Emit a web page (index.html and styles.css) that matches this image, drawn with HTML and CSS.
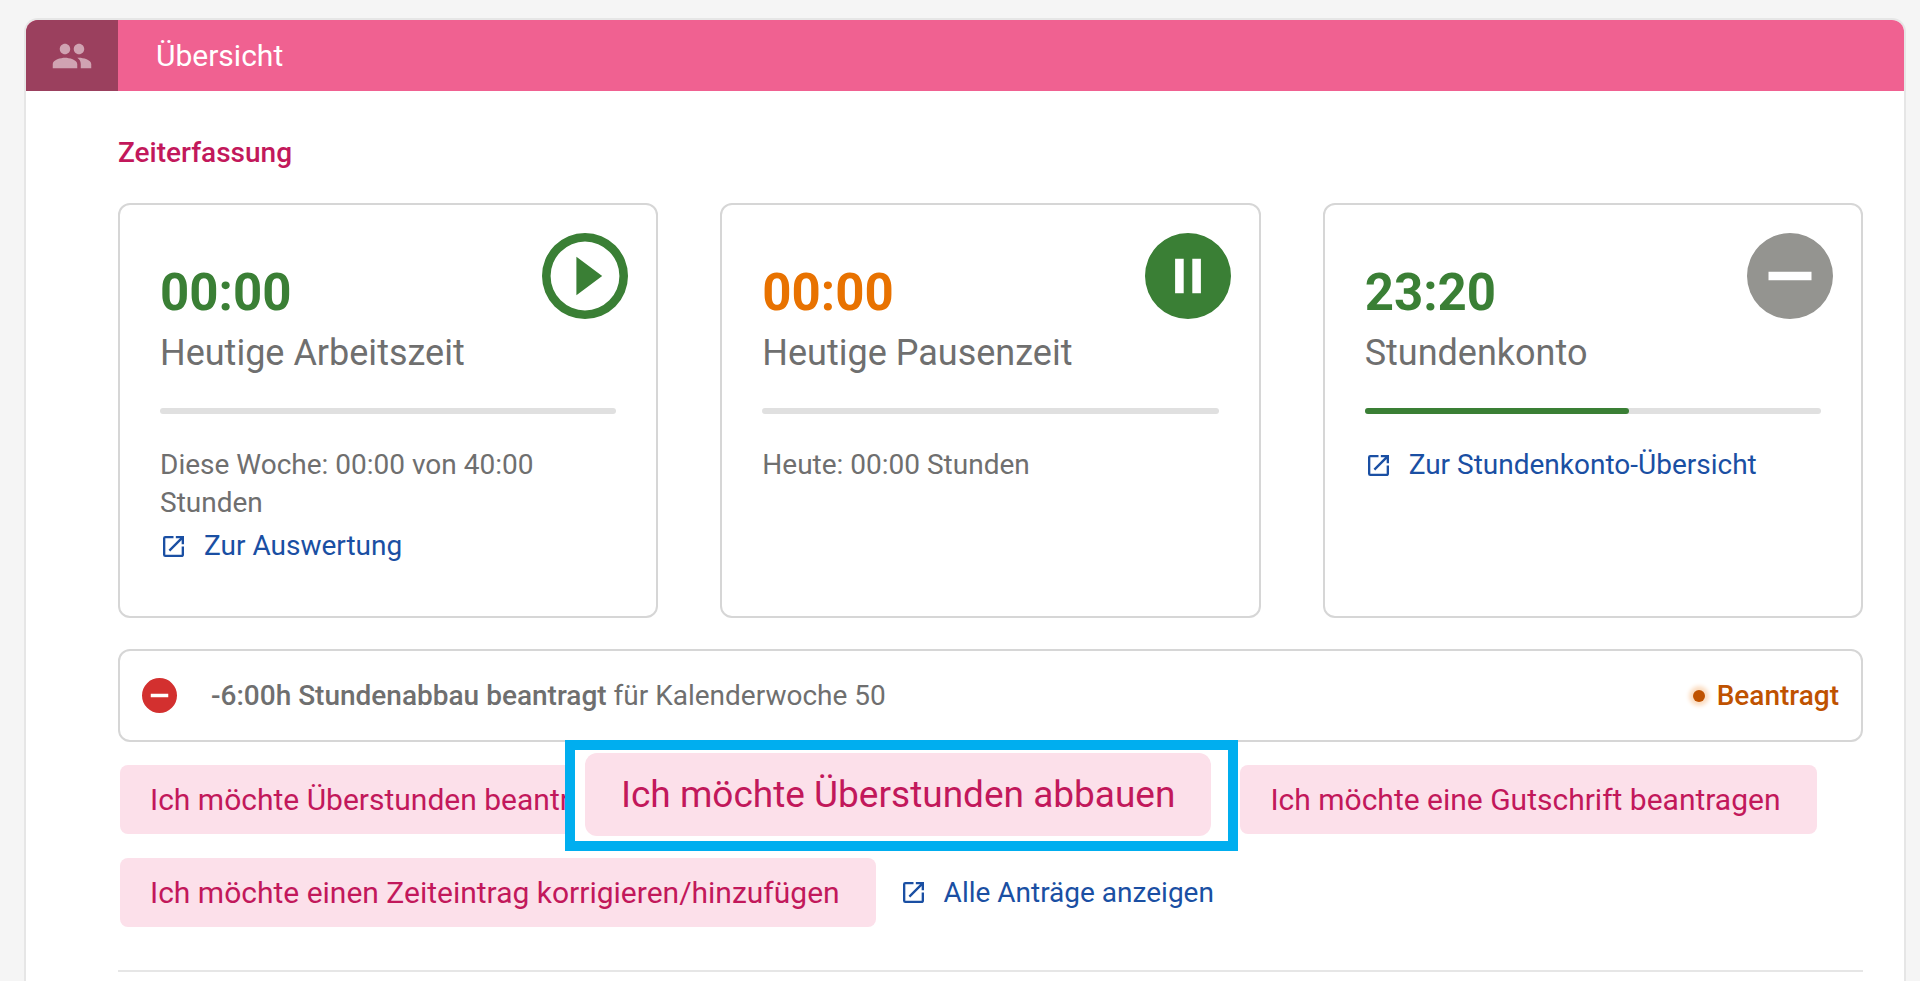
FILE: index.html
```
<!DOCTYPE html>
<html lang="de">
<head>
<meta charset="utf-8">
<title>Übersicht</title>
<link rel="stylesheet" href="styles.css">
</head>
<body>
<svg class="sprite" aria-hidden="true">
  <symbol id="open" viewBox="3 3 18 18"><path d="M19 19H5V5h7V3H5a2 2 0 0 0-2 2v14a2 2 0 0 0 2 2h14c1.100 0 2-.9 2-2v-7h-2v7zM14 3v2h3.590l-9.830 9.830 1.410 1.410L19 6.410V10h2V3h-7z"/></symbol>
</svg>
<main class="panel">
  <header class="panel-header">
    <div class="panel-icon">
      <svg viewBox="0 0 24 24" aria-hidden="true"><path d="M16 11c1.660 0 2.990-1.340 2.990-3S17.660 5 16 5s-3 1.340-3 3 1.340 3 3 3zm-8 0c1.660 0 2.990-1.340 2.990-3S9.660 5 8 5 5 6.340 5 8s1.340 3 3 3zm0 2c-2.330 0-7 1.170-7 3.500V19h14v-2.500c0-2.330-4.670-3.500-7-3.500zm8 0c-.29 0-.62.02-.97.05 1.160.84 1.970 1.970 1.970 3.450V19h6v-2.500c0-2.330-4.670-3.500-7-3.500z"/></svg>
    </div>
    <h1 class="panel-title">Übersicht</h1>
  </header>
  <div class="panel-body">
    <h2 class="section-title">Zeiterfassung</h2>
    <section class="cards">
      <article class="card">
        <div class="card-head">
          <div class="card-figures">
            <div class="value green">00:00</div>
            <div class="label">Heutige Arbeitszeit</div>
          </div>
          <button class="round green" type="button" aria-label="Arbeitszeit starten">
            <svg viewBox="2 2 20 20" aria-hidden="true"><path d="M10 16.500l6-4.500-6-4.500v9zM12 2a10 10 0 1 0 0 20 10 10 0 0 0 0-20zm0 18a8 8 0 1 1 0-16 8 8 0 0 1 0 16z"/></svg>
          </button>
        </div>
        <div class="bar"></div>
        <p class="note">Diese Woche: 00:00 von 40:00 Stunden</p>
        <a class="link" href="#"><svg aria-hidden="true"><use href="#open"/></svg>Zur Auswertung</a>
      </article>
      <article class="card">
        <div class="card-head">
          <div class="card-figures">
            <div class="value orange">00:00</div>
            <div class="label">Heutige Pausenzeit</div>
          </div>
          <button class="round green" type="button" aria-label="Pause">
            <svg viewBox="2 2 20 20" aria-hidden="true"><path d="M12 2a10 10 0 1 0 0 20 10 10 0 0 0 0-20zm-1 14H9V8h2v8zm4 0h-2V8h2v8z"/></svg>
          </button>
        </div>
        <div class="bar"></div>
        <p class="note">Heute: 00:00 Stunden</p>
      </article>
      <article class="card">
        <div class="card-head">
          <div class="card-figures">
            <div class="value green">23:20</div>
            <div class="label">Stundenkonto</div>
          </div>
          <button class="round gray" type="button" aria-label="Stunden abbauen">
            <svg viewBox="2 2 20 20" aria-hidden="true"><path d="M12 2a10 10 0 1 0 0 20 10 10 0 0 0 0-20zm5 11H7v-2h10v2z"/></svg>
          </button>
        </div>
        <div class="bar"><div class="bar-fill" style="width: 58%"></div></div>
        <a class="link" href="#"><svg aria-hidden="true"><use href="#open"/></svg>Zur Stundenkonto-Übersicht</a>
      </article>
    </section>
    <section class="request">
      <svg class="request-icon" viewBox="2 2 20 20" aria-hidden="true"><path d="M12 2a10 10 0 1 0 0 20 10 10 0 0 0 0-20zm5 11H7v-2h10v2z"/></svg>
      <p class="request-text"><strong>-6:00h Stundenabbau beantragt</strong> für Kalenderwoche 50</p>
      <span class="status">Beantragt</span>
    </section>
    <section class="actions">
      <div class="action-row">
        <button class="action" type="button">Ich möchte Überstunden beantragen</button>
        <div class="spotlight"><button class="action large" type="button">Ich möchte Überstunden abbauen</button></div>
        <button class="action" type="button">Ich möchte eine Gutschrift beantragen</button>
      </div>
      <div class="action-row">
        <button class="action" type="button">Ich möchte einen Zeiteintrag korrigieren/hinzufügen</button>
        <a class="link" href="#"><svg aria-hidden="true"><use href="#open"/></svg>Alle Anträge anzeigen</a>
      </div>
    </section>
    <hr class="divider">
  </div>
</main>
</body>
</html>
```
FILE: styles.css
```
* {
  box-sizing: border-box;
}

body {
  margin: 0;
  padding: 18px 14px 0 24px;
  background: #f5f5f5;
  color: #6f6f6f;
  font-family: Roboto, sans-serif;
  font-size: 28px;
  line-height: 38px;
}

h1,
h2,
p {
  margin: 0;
}

button {
  border: 0;
  font-family: inherit;
  cursor: pointer;
}

svg {
  display: block;
  flex: none;
  fill: currentColor;
}

.sprite {
  position: absolute;
  width: 0;
  height: 0;
}

.panel {
  min-height: calc(100vh - 18px);
  border: 2px solid #e6e6e6;
  border-bottom: 0;
  border-radius: 14px 14px 0 0;
  background: #fff;
  overflow: hidden;
}

.panel-header {
  display: flex;
  align-items: center;
  height: 71px;
  background: #f06191;
  color: #fff;
}

.panel-icon {
  display: flex;
  align-items: center;
  justify-content: center;
  align-self: stretch;
  width: 92px;
  background: #9b405e;
  color: #d0a3b2;
}

.panel-icon svg {
  width: 42px;
  height: 42px;
}

.panel-title {
  padding-left: 38px;
  font-size: 30px;
  font-weight: 400;
}

.panel-body {
  padding: 43px 41px 0 92px;
}

.section-title {
  margin-bottom: 31px;
  color: #c2185b;
  font-size: 28px;
  font-weight: 500;
}

.cards {
  display: grid;
  grid-template-columns: repeat(3, 1fr);
  gap: 62px;
}

.card {
  padding: 28px 40px 51px;
  border: 2px solid #d6d6d6;
  border-radius: 12px;
}

.card-head {
  display: flex;
  justify-content: space-between;
  align-items: flex-start;
}

.card-figures {
  padding-top: 27px;
}

.value {
  font-size: 51px;
  font-weight: 700;
  line-height: 66px;
}

.label {
  font-size: 36px;
  line-height: 54px;
  white-space: nowrap;
}

.green {
  color: #3a7f35;
}

.orange {
  color: #e87200;
}

.gray {
  color: #949490;
}

.round {
  margin-right: -12px;
  padding: 0;
  background: none;
}

.round svg {
  width: 86px;
  height: 86px;
}

.bar {
  height: 6px;
  margin: 28px 0 32px;
  border-radius: 3px;
  background: #e0e0e0;
}

.bar-fill {
  height: 100%;
  border-radius: 3px;
  background: #3a7f35;
}

.note {
  margin-bottom: 5px;
}

.link {
  display: flex;
  align-items: center;
  gap: 20px;
  color: #1a4fa3;
  text-decoration: none;
}

.link svg {
  width: 21px;
  height: 21px;
  margin-left: 3px;
}

.request {
  display: flex;
  align-items: center;
  height: 93px;
  margin-top: 31px;
  padding: 0 22px;
  border: 2px solid #d6d6d6;
  border-radius: 12px;
}

.request-icon {
  width: 35px;
  height: 35px;
  color: #d3302f;
}

.request-text {
  flex: 1;
  padding-left: 34px;
}

.request-text strong {
  font-weight: 500;
}

.status {
  display: flex;
  align-items: center;
  gap: 12px;
  color: #bf5200;
  font-weight: 500;
}

.status::before {
  content: "";
  width: 12px;
  height: 12px;
  border-radius: 50%;
  background: #bf5200;
  box-shadow: 0 0 4px 4px #fbdcc0;
}

.actions {
  display: flex;
  flex-direction: column;
  gap: 24px;
  padding: 23px 2px 43px;
}

.action-row {
  display: flex;
  align-items: center;
}

.action-row .link {
  padding-left: 24px;
}

.action {
  flex: none;
  height: 69px;
  padding: 0 36px 0 30px;
  border-radius: 8px;
  background: #fce0ea;
  color: #c2185b;
  font-size: 30px;
  white-space: nowrap;
}

.spotlight {
  z-index: 1;
  flex: none;
  margin: -25px 2px -17px -106px;
  padding: 3px 17px 5px 10px;
  border: 10px solid #00aeef;
  background: #fff;
}

.action.large {
  display: block;
  height: 83px;
  padding: 0 36px;
  border-radius: 12px;
  font-size: 37px;
}

.divider {
  height: 2px;
  margin: 0;
  border: 0;
  background: #e6e6e6;
}
```
